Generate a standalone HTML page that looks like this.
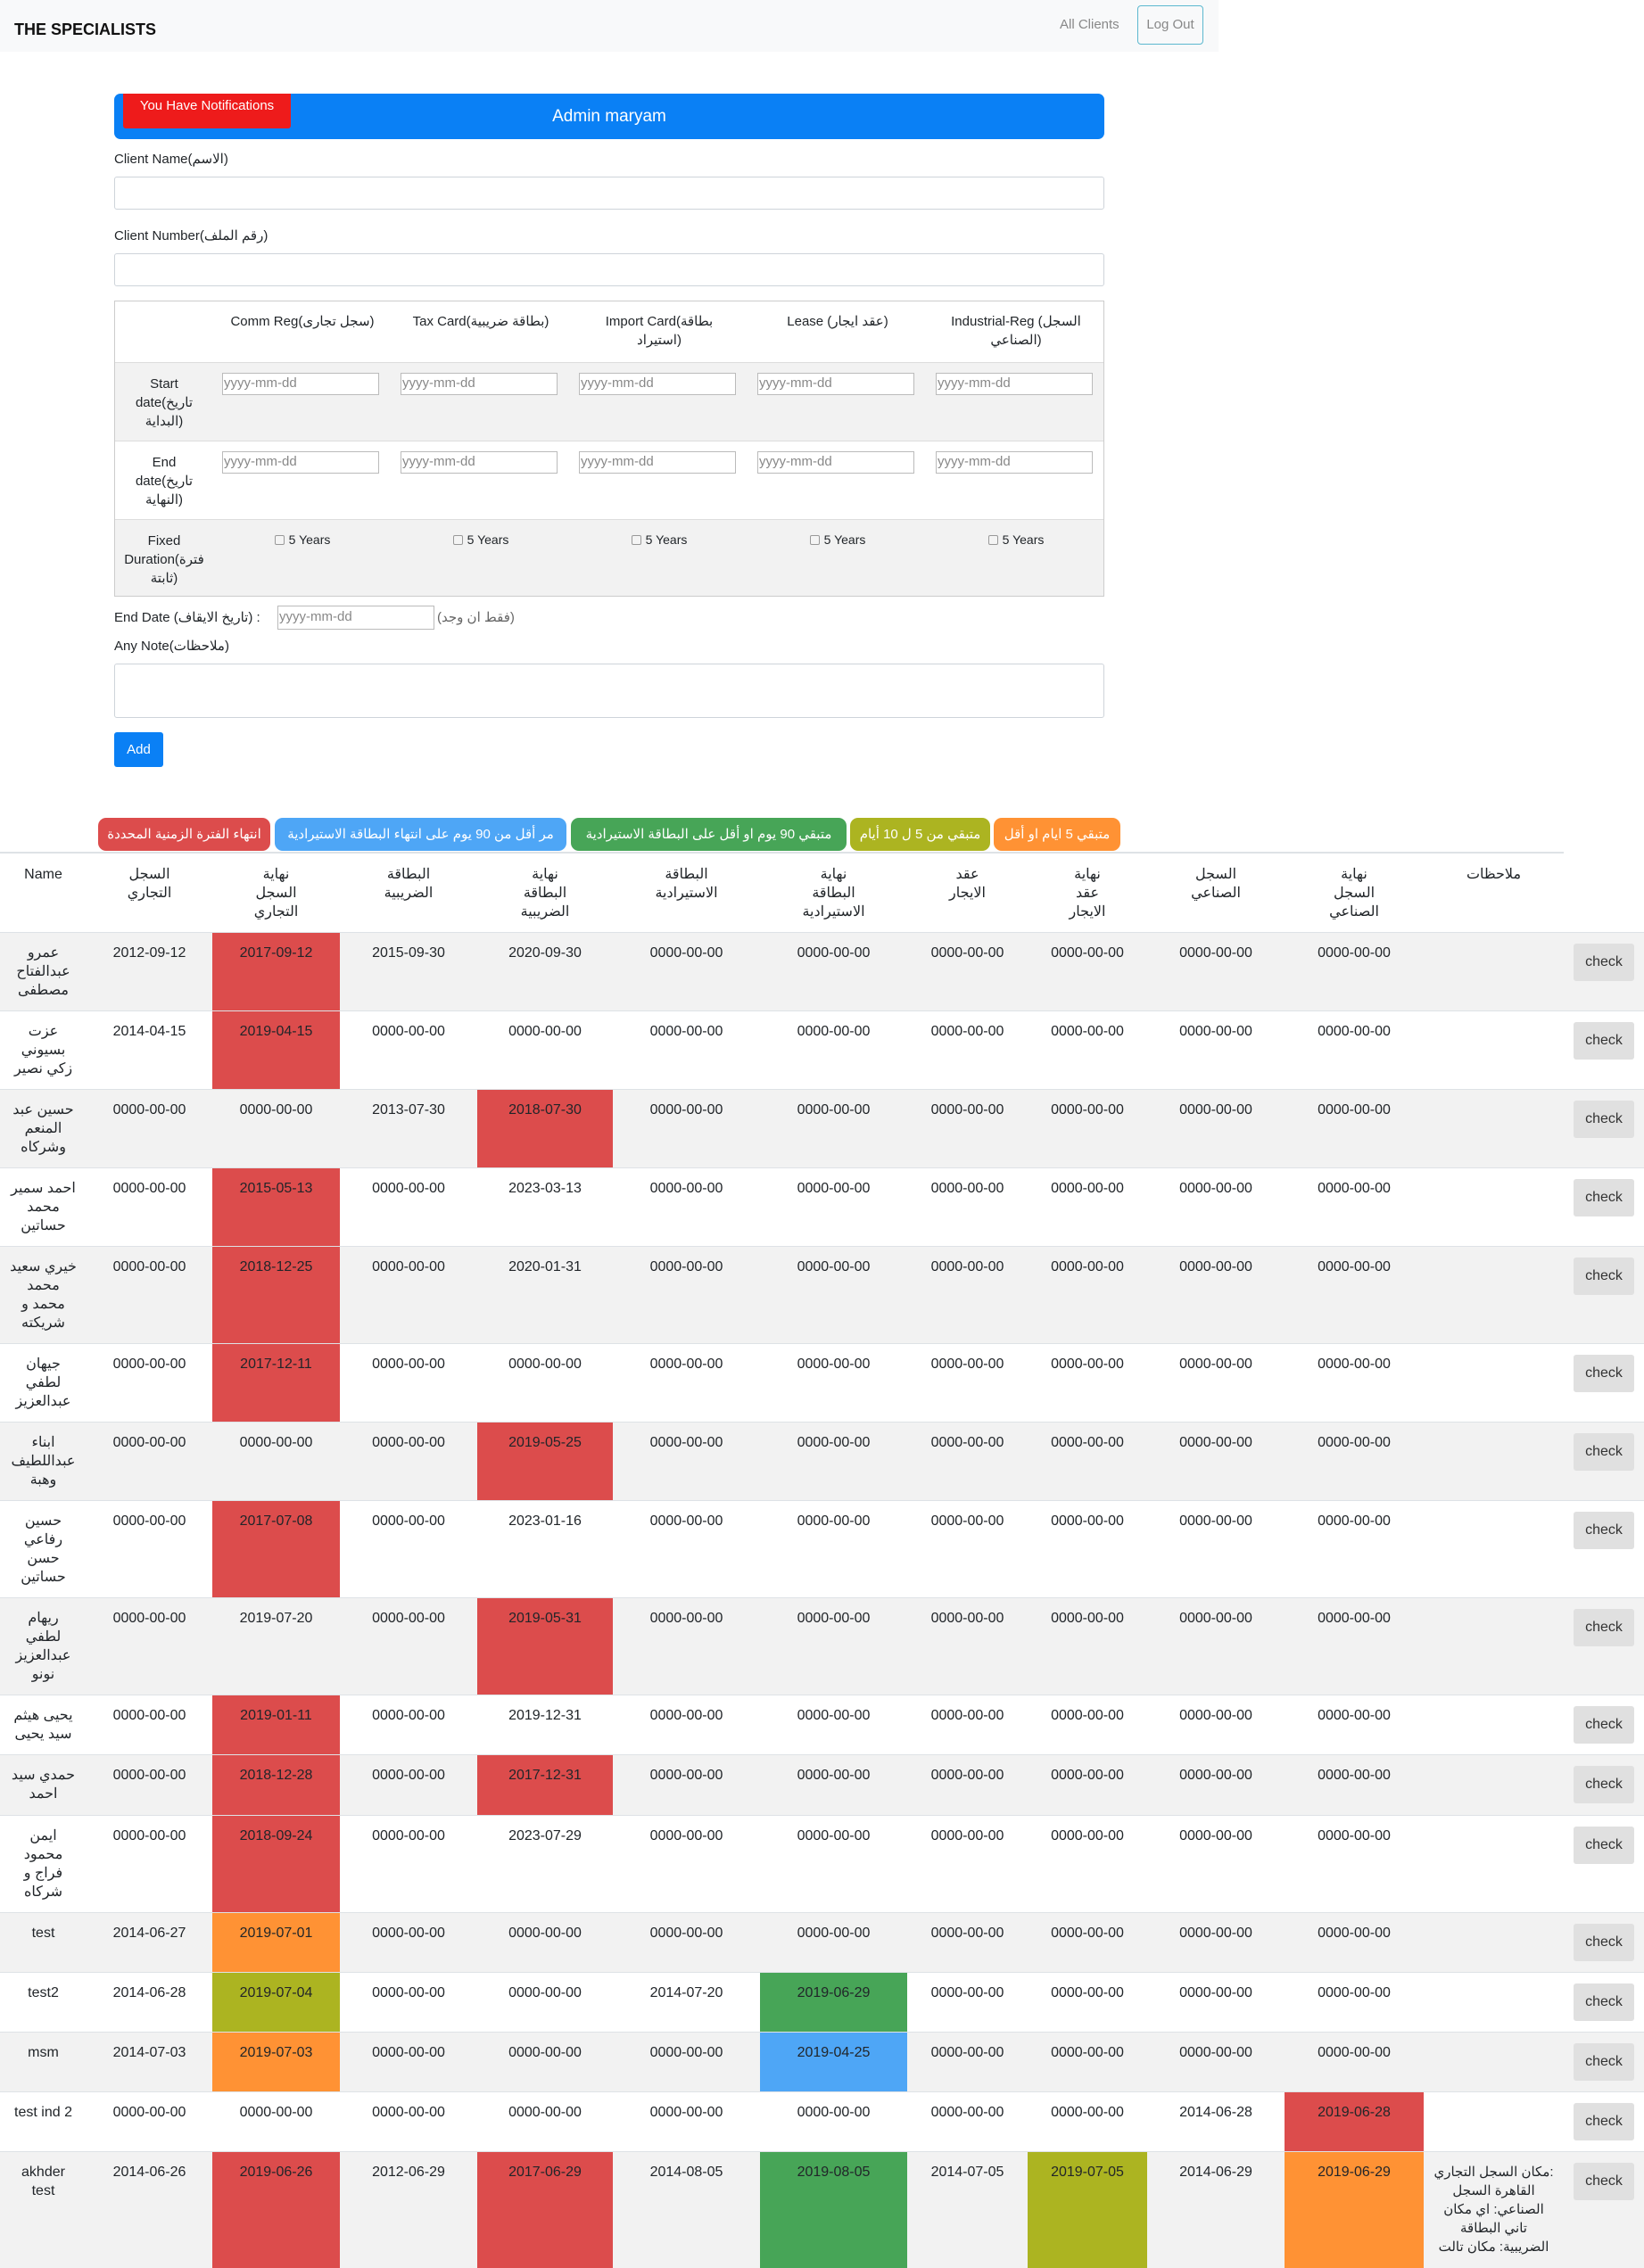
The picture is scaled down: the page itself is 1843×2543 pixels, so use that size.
<!DOCTYPE html>
<html><head><meta charset="utf-8">
<style>
*{box-sizing:border-box;margin:0;padding:0}
body{width:1843px;height:2540px;position:relative;background:#fff;font-family:"Liberation Sans","Noto Sans CJK SC",sans-serif;color:#212529;font-size:16px;overflow:hidden}
.a{position:absolute}
.nav{left:0;top:0;width:1366px;height:58px;background:#f8f9fa}
.inp{position:absolute;border:1px solid #ced4da;border-radius:3px;background:#fff}
.ph{position:absolute;border:1px solid #bbb;background:#fff;color:#888;font-size:15px;line-height:22px;padding-left:1px;width:176px;height:25px}
.lbl{position:absolute;font-size:15px;line-height:21px}
.ft{position:absolute;left:128px;top:337px;width:1110px;height:332px;border:1px solid #ccc;overflow:hidden}
.ft .r{position:absolute;left:0;width:1108px}
.ft .c{position:absolute;text-align:center;font-size:15px;line-height:21px;width:200px}
.ft .l{position:absolute;left:0;width:110px;text-align:center;font-size:15px;line-height:21px}
.cb{display:inline-block;width:11px;height:11px;border:1px solid #999;border-radius:2px;background:#f4f4f4;vertical-align:-1px;margin-right:5px}
.badge{position:absolute;top:917px;height:37px;border-radius:9px;color:#fff;font-size:15px;line-height:37px;text-align:center;white-space:nowrap;overflow:hidden}
table{position:absolute;left:0;top:958px;width:1843px;border-collapse:collapse;table-layout:fixed}
td,th{padding:12px 4px;line-height:21px;vertical-align:top;text-align:center;font-weight:normal;font-size:16px;border-top:1px solid #dee2e6}
tbody tr:nth-child(odd){background:#f2f2f2}
.R{background:#dc4c4c}.O{background:#ff9234}.Y{background:#acb421}.G{background:#47a557}.B{background:#4ea6f6}
.btn{display:inline-block;width:68px;height:42px;background:#e0e0e0;border-radius:3px;line-height:42px;color:#333;font-size:16px;margin-left:7px;text-align:center}
td:last-child{text-align:left;padding-left:4px}
</style></head><body>
<div class="a nav"></div>
<div class="a" style="left:16px;top:23px;font-size:18px;font-weight:bold;color:#111">THE SPECIALISTS</div>
<div class="a" style="left:1188px;top:19px;font-size:15px;color:#888">All Clients</div>
<div class="a" style="left:1275px;top:6px;width:74px;height:44px;border:1px solid #5bb8cf;border-radius:4px;color:#888;font-size:15px;line-height:42px;text-align:center">Log Out</div>

<div class="a" style="left:128px;top:105px;width:1110px;height:51px;background:#0a80f5;border-radius:7px;color:#fff;font-size:19px;line-height:52px;text-align:center">Admin maryam</div>
<div class="a" style="left:138px;top:105px;width:188px;height:39px;background:#ee1b1b;color:#fff;font-size:15px;line-height:28px;text-align:center;border-radius:0 0 3px 3px">You Have Notifications</div>

<div class="lbl" style="left:128px;top:168px">Client Name(الاسم)</div>
<div class="inp" style="left:128px;top:198px;width:1110px;height:37px"></div>
<div class="lbl" style="left:128px;top:254px">Client Number(رقم الملف)</div>
<div class="inp" style="left:128px;top:284px;width:1110px;height:37px"></div>

<div class="ft">
 <div class="r" style="top:0;height:68px;background:#fff"></div>
 <div class="r" style="top:68px;height:88px;background:#f2f2f2;border-top:1px solid #ddd"></div>
 <div class="r" style="top:156px;height:88px;background:#fff;border-top:1px solid #ddd"></div>
 <div class="r" style="top:244px;height:86px;background:#f2f2f2;border-top:1px solid #ddd"></div>
 <div class="c" style="left:110px;top:12px">Comm Reg(سجل تجارى)</div>
 <div class="c" style="left:310px;top:12px">Tax Card(بطاقة ضريبية)</div>
 <div class="c" style="left:510px;top:12px">Import Card(بطاقة<br>استيراد)</div>
 <div class="c" style="left:710px;top:12px">Lease (عقد ايجار)</div>
 <div class="c" style="left:910px;top:12px">Industrial-Reg (السجل<br>الصناعي)</div>
 <div class="l" style="top:82px">Start<br>date(تاريخ<br>البداية)</div>
 <div class="l" style="top:170px">End<br>date(تاريخ<br>النهاية)</div>
 <div class="l" style="top:258px">Fixed<br>Duration(فترة<br>ثابتة)</div>
 <div class="ph" style="left:120px;top:80px">yyyy-mm-dd</div>
 <div class="ph" style="left:320px;top:80px">yyyy-mm-dd</div>
 <div class="ph" style="left:520px;top:80px">yyyy-mm-dd</div>
 <div class="ph" style="left:720px;top:80px">yyyy-mm-dd</div>
 <div class="ph" style="left:920px;top:80px">yyyy-mm-dd</div>
 <div class="ph" style="left:120px;top:168px">yyyy-mm-dd</div>
 <div class="ph" style="left:320px;top:168px">yyyy-mm-dd</div>
 <div class="ph" style="left:520px;top:168px">yyyy-mm-dd</div>
 <div class="ph" style="left:720px;top:168px">yyyy-mm-dd</div>
 <div class="ph" style="left:920px;top:168px">yyyy-mm-dd</div>
 <div class="c" style="left:110px;top:257px;font-size:14px"><span class="cb"></span>5 Years</div>
 <div class="c" style="left:310px;top:257px;font-size:14px"><span class="cb"></span>5 Years</div>
 <div class="c" style="left:510px;top:257px;font-size:14px"><span class="cb"></span>5 Years</div>
 <div class="c" style="left:710px;top:257px;font-size:14px"><span class="cb"></span>5 Years</div>
 <div class="c" style="left:910px;top:257px;font-size:14px"><span class="cb"></span>5 Years</div>
</div>

<div class="lbl" style="left:128px;top:682px">End Date (تاريخ الايقاف) :</div>
<div class="ph" style="left:311px;top:679px;height:27px;line-height:24px">yyyy-mm-dd</div>
<div class="lbl" style="left:490px;top:682px;color:#666">(فقط ان وجد)</div>
<div class="lbl" style="left:128px;top:714px">Any Note(ملاحظات)</div>
<div class="inp" style="left:128px;top:744px;width:1110px;height:61px"></div>
<div class="a" style="left:128px;top:821px;width:55px;height:39px;background:#0a80f5;border-radius:3px;color:#fff;font-size:15px;line-height:39px;text-align:center">Add</div>

<div class="badge R" style="left:110px;width:193px">انتهاء الفترة الزمنية المحددة</div>
<div class="badge B" style="left:308px;width:327px">مر أقل من 90 يوم على انتهاء البطاقة الاستيرادية</div>
<div class="badge G" style="left:640px;width:309px">متبقي 90 يوم او أقل على البطاقة الاستيرادية</div>
<div class="badge Y" style="left:953px;width:157px">متبقي من 5 ل 10 أيام</div>
<div class="badge O" style="left:1114px;width:142px">متبقي 5 ايام او أقل</div>
<div class="a" style="left:0;top:955px;width:1753px;height:2px;background:#dee2e6"></div>

<table>
<colgroup><col style="width:97px"><col style="width:141px"><col style="width:143px"><col style="width:154px"><col style="width:152px"><col style="width:165px"><col style="width:165px"><col style="width:135px"><col style="width:134px"><col style="width:154px"><col style="width:156px"><col style="width:157px"><col style="width:90px"></colgroup>
<thead><tr style="height:85px"><th style="border-top:0">Name</th><th style="border-top:0">السجل<br>التجاري</th><th style="border-top:0">نهاية<br>السجل<br>التجاري</th><th style="border-top:0">البطاقة<br>الضريبية</th><th style="border-top:0">نهاية<br>البطاقة<br>الضريبية</th><th style="border-top:0">البطاقة<br>الاستيرادية</th><th style="border-top:0">نهاية<br>البطاقة<br>الاستيرادية</th><th style="border-top:0">عقد<br>الايجار</th><th style="border-top:0">نهاية<br>عقد<br>الايجار</th><th style="border-top:0">السجل<br>الصناعي</th><th style="border-top:0">نهاية<br>السجل<br>الصناعي</th><th style="border-top:0">ملاحظات</th><th style="border-top:0"></th></tr></thead>
<tbody>
<tr style="height:88px"><td>عمرو<br>عبدالفتاح<br>مصطفى</td><td>2012-09-12</td><td class="R">2017-09-12</td><td>2015-09-30</td><td>2020-09-30</td><td>0000-00-00</td><td>0000-00-00</td><td>0000-00-00</td><td>0000-00-00</td><td>0000-00-00</td><td>0000-00-00</td><td></td><td><span class="btn">check</span></td></tr>
<tr style="height:88px"><td>عزت<br>بسيوني<br>زكي نصير</td><td>2014-04-15</td><td class="R">2019-04-15</td><td>0000-00-00</td><td>0000-00-00</td><td>0000-00-00</td><td>0000-00-00</td><td>0000-00-00</td><td>0000-00-00</td><td>0000-00-00</td><td>0000-00-00</td><td></td><td><span class="btn">check</span></td></tr>
<tr style="height:88px"><td>حسين عبد<br>المنعم<br>وشركاه</td><td>0000-00-00</td><td>0000-00-00</td><td>2013-07-30</td><td class="R">2018-07-30</td><td>0000-00-00</td><td>0000-00-00</td><td>0000-00-00</td><td>0000-00-00</td><td>0000-00-00</td><td>0000-00-00</td><td></td><td><span class="btn">check</span></td></tr>
<tr style="height:88px"><td>احمد سمير<br>محمد<br>حساتين</td><td>0000-00-00</td><td class="R">2015-05-13</td><td>0000-00-00</td><td>2023-03-13</td><td>0000-00-00</td><td>0000-00-00</td><td>0000-00-00</td><td>0000-00-00</td><td>0000-00-00</td><td>0000-00-00</td><td></td><td><span class="btn">check</span></td></tr>
<tr style="height:108px"><td>خيري سعيد<br>محمد<br>محمد و<br>شريكته</td><td>0000-00-00</td><td class="R">2018-12-25</td><td>0000-00-00</td><td>2020-01-31</td><td>0000-00-00</td><td>0000-00-00</td><td>0000-00-00</td><td>0000-00-00</td><td>0000-00-00</td><td>0000-00-00</td><td></td><td><span class="btn">check</span></td></tr>
<tr style="height:88px"><td>جيهان<br>لطفي<br>عبدالعزيز</td><td>0000-00-00</td><td class="R">2017-12-11</td><td>0000-00-00</td><td>0000-00-00</td><td>0000-00-00</td><td>0000-00-00</td><td>0000-00-00</td><td>0000-00-00</td><td>0000-00-00</td><td>0000-00-00</td><td></td><td><span class="btn">check</span></td></tr>
<tr style="height:88px"><td>ابناء<br>عبداللطيف<br>وهبة</td><td>0000-00-00</td><td>0000-00-00</td><td>0000-00-00</td><td class="R">2019-05-25</td><td>0000-00-00</td><td>0000-00-00</td><td>0000-00-00</td><td>0000-00-00</td><td>0000-00-00</td><td>0000-00-00</td><td></td><td><span class="btn">check</span></td></tr>
<tr style="height:108px"><td>حسين<br>رفاعي<br>حسن<br>حساتين</td><td>0000-00-00</td><td class="R">2017-07-08</td><td>0000-00-00</td><td>2023-01-16</td><td>0000-00-00</td><td>0000-00-00</td><td>0000-00-00</td><td>0000-00-00</td><td>0000-00-00</td><td>0000-00-00</td><td></td><td><span class="btn">check</span></td></tr>
<tr style="height:108px"><td>ريهام<br>لطفي<br>عبدالعزيز<br>نونو</td><td>0000-00-00</td><td>2019-07-20</td><td>0000-00-00</td><td class="R">2019-05-31</td><td>0000-00-00</td><td>0000-00-00</td><td>0000-00-00</td><td>0000-00-00</td><td>0000-00-00</td><td>0000-00-00</td><td></td><td><span class="btn">check</span></td></tr>
<tr style="height:66px"><td>يحيى هيثم<br>سيد يحيى</td><td>0000-00-00</td><td class="R">2019-01-11</td><td>0000-00-00</td><td>2019-12-31</td><td>0000-00-00</td><td>0000-00-00</td><td>0000-00-00</td><td>0000-00-00</td><td>0000-00-00</td><td>0000-00-00</td><td></td><td><span class="btn">check</span></td></tr>
<tr style="height:68px"><td>حمدي سيد<br>احمد</td><td>0000-00-00</td><td class="R">2018-12-28</td><td>0000-00-00</td><td class="R">2017-12-31</td><td>0000-00-00</td><td>0000-00-00</td><td>0000-00-00</td><td>0000-00-00</td><td>0000-00-00</td><td>0000-00-00</td><td></td><td><span class="btn">check</span></td></tr>
<tr style="height:108px"><td>ايمن<br>محمود<br>فراج و<br>شركاه</td><td>0000-00-00</td><td class="R">2018-09-24</td><td>0000-00-00</td><td>2023-07-29</td><td>0000-00-00</td><td>0000-00-00</td><td>0000-00-00</td><td>0000-00-00</td><td>0000-00-00</td><td>0000-00-00</td><td></td><td><span class="btn">check</span></td></tr>
<tr style="height:63px"><td>test</td><td>2014-06-27</td><td class="O">2019-07-01</td><td>0000-00-00</td><td>0000-00-00</td><td>0000-00-00</td><td>0000-00-00</td><td>0000-00-00</td><td>0000-00-00</td><td>0000-00-00</td><td>0000-00-00</td><td></td><td><span class="btn">check</span></td></tr>
<tr style="height:63px"><td>test2</td><td>2014-06-28</td><td class="Y">2019-07-04</td><td>0000-00-00</td><td>0000-00-00</td><td>2014-07-20</td><td class="G">2019-06-29</td><td>0000-00-00</td><td>0000-00-00</td><td>0000-00-00</td><td>0000-00-00</td><td></td><td><span class="btn">check</span></td></tr>
<tr style="height:63px"><td>msm</td><td>2014-07-03</td><td class="O">2019-07-03</td><td>0000-00-00</td><td>0000-00-00</td><td>0000-00-00</td><td class="B">2019-04-25</td><td>0000-00-00</td><td>0000-00-00</td><td>0000-00-00</td><td>0000-00-00</td><td></td><td><span class="btn">check</span></td></tr>
<tr style="height:63px"><td>test ind 2</td><td>0000-00-00</td><td>0000-00-00</td><td>0000-00-00</td><td>0000-00-00</td><td>0000-00-00</td><td>0000-00-00</td><td>0000-00-00</td><td>0000-00-00</td><td>2014-06-28</td><td class="R">2019-06-28</td><td></td><td><span class="btn">check</span></td></tr>
<tr style="height:130px"><td>akhder<br>test</td><td>2014-06-26</td><td class="R">2019-06-26</td><td>2012-06-29</td><td class="R">2017-06-29</td><td>2014-08-05</td><td class="G">2019-08-05</td><td>2014-07-05</td><td class="Y">2019-07-05</td><td>2014-06-29</td><td class="O">2019-06-29</td><td style="font-size:15px">مكان السجل التجاري:<br>القاهرة السجل<br>الصناعي: اي مكان<br>تاني البطاقة<br>الضريبية: مكان تالت</td><td><span class="btn">check</span></td></tr>
</tbody></table>
</body></html>
